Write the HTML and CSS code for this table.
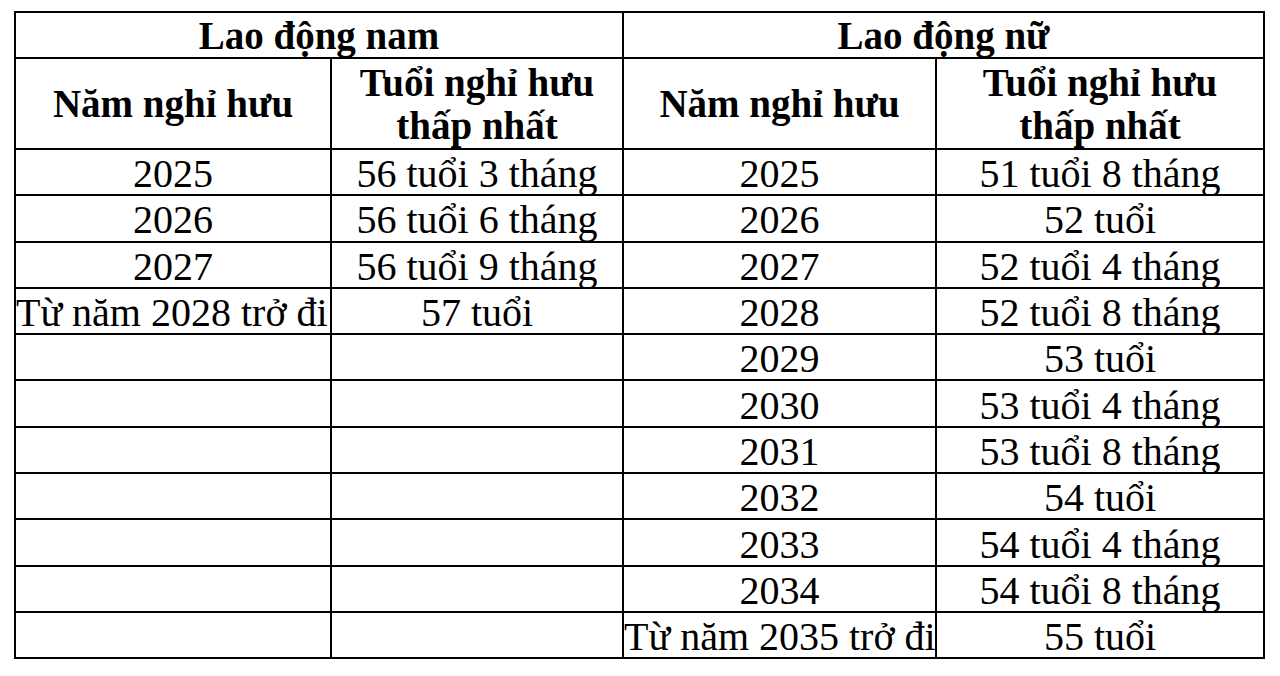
FILE: index.html
```html
<!DOCTYPE html>
<html lang="vi">
<head>
<meta charset="utf-8">
<title>Tuổi nghỉ hưu</title>
<link rel="stylesheet" href="styles.css">
</head>
<body>
<table class="tbl">
  <colgroup>
    <col class="c1"><col class="c2"><col class="c3"><col class="c4">
  </colgroup>
  <thead>
    <tr class="h1">
      <th colspan="2">Lao động nam</th>
      <th colspan="2">Lao động nữ</th>
    </tr>
    <tr class="h2">
      <th>Năm nghỉ hưu</th>
      <th>Tuổi nghỉ hưu<br>thấp nhất</th>
      <th>Năm nghỉ hưu</th>
      <th>Tuổi nghỉ hưu<br>thấp nhất</th>
    </tr>
  </thead>
  <tbody>
    <tr><td>2025</td><td>56 tuổi 3 tháng</td><td>2025</td><td>51 tuổi 8 tháng</td></tr>
    <tr><td>2026</td><td>56 tuổi 6 tháng</td><td>2026</td><td>52 tuổi</td></tr>
    <tr><td>2027</td><td>56 tuổi 9 tháng</td><td>2027</td><td>52 tuổi 4 tháng</td></tr>
    <tr><td class="left">Từ năm 2028 trở đi</td><td>57 tuổi</td><td>2028</td><td>52 tuổi 8 tháng</td></tr>
    <tr><td></td><td></td><td>2029</td><td>53 tuổi</td></tr>
    <tr><td></td><td></td><td>2030</td><td>53 tuổi 4 tháng</td></tr>
    <tr><td></td><td></td><td>2031</td><td>53 tuổi 8 tháng</td></tr>
    <tr><td></td><td></td><td>2032</td><td>54 tuổi</td></tr>
    <tr><td></td><td></td><td>2033</td><td>54 tuổi 4 tháng</td></tr>
    <tr><td></td><td></td><td>2034</td><td>54 tuổi 8 tháng</td></tr>
    <tr><td></td><td></td><td class="left">Từ năm 2035 trở đi</td><td>55 tuổi</td></tr>
  </tbody>
</table>
</body>
</html>
```
FILE: styles.css
```css
html, body {
  margin: 0;
  padding: 0;
  background: #ffffff;
}

body {
  padding: 11px 0 0 14px;
  font-family: "Liberation Serif", "Times New Roman", serif;
  color: #000000;
}

.tbl {
  border-collapse: collapse;
  table-layout: fixed;
  width: 1249px;
  border: 2px solid #000;
}

.c1 { width: 316px; }
.c2 { width: 292px; }
.c3 { width: 313px; }
.c4 { width: 328px; }

.tbl th,
.tbl td {
  border: 2px solid #000;
  padding: 0;
  text-align: center;
  vertical-align: middle;
  white-space: nowrap;
  overflow: visible;
}

.tbl th {
  font-weight: bold;
  font-size: 39px;
  line-height: 43px;
}

.h1 th {
  height: 44px;
}

.h2 th {
  height: 89px;
}

.tbl tbody tr {
  height: 46.3px;
}

.tbl td {
  font-size: 40px;
  line-height: 40px;
  padding-top: 4px;
}

.tbl td.left {
  text-align: left;
}
```
